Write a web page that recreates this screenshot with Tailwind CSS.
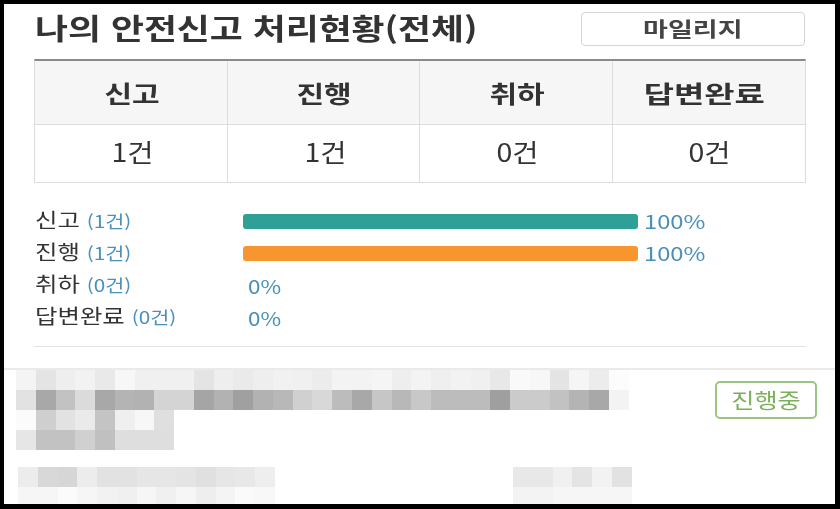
<!DOCTYPE html>
<html lang="ko">
<head>
    <meta charset="UTF-8">
    <title>안전신고 처리현황</title>
    <script src="https://cdn.jsdelivr.net/npm/@tailwindcss/browser@4"></script>
</head>
<body class="bg-black h-[509px] overflow-hidden font-['Noto_Sans_CJK_KR','Noto_Sans',sans-serif]">
    <div class="ml-[4px] mt-[4px] w-[831px] h-[500px] bg-white overflow-hidden absolute blur-[0.4px]">
        <div class="px-[30px]">
            <div class="flex justify-between items-start h-[55px]">
                <h2 class="ml-[1px] mt-[1px] text-[29px] leading-[44px] font-bold text-[#333] whitespace-nowrap origin-left scale-x-[1.235]">나의 안전신고 처리현황(전체)</h2>
                <button class="mt-[8px] w-[224px] h-[34px] border border-[#d5d5d5] rounded-[4px] text-[20px] leading-[30px] font-bold text-[#444]"><span class="inline-block scale-x-[1.35]">마일리지</span></button>
            </div>
            <div class="w-[772px] border-t-2 border-t-[#8a8a8a] border-x border-b border-x-[#ddd] border-b-[#ddd] grid grid-cols-4 text-center text-[#333]">
                <div class="h-[64px] bg-[#f6f6f6] border-b border-r border-[#ddd] flex items-center justify-center text-[24px] font-bold"><span class="translate-x-[1px] scale-x-[1.25]">신고</span></div>
                <div class="h-[64px] bg-[#f6f6f6] border-b border-r border-[#ddd] flex items-center justify-center text-[24px] font-bold"><span class="translate-x-[1px] scale-x-[1.25]">진행</span></div>
                <div class="h-[64px] bg-[#f6f6f6] border-b border-r border-[#ddd] flex items-center justify-center text-[24px] font-bold"><span class="translate-x-[1px] scale-x-[1.25]">취하</span></div>
                <div class="h-[64px] bg-[#f6f6f6] border-b border-[#ddd] flex items-center justify-center text-[24px] font-bold"><span class="-translate-x-[5px] scale-x-[1.37]">답변완료</span></div>
                <div class="h-[57px] pb-[3px] border-r border-[#ddd] flex items-center justify-center text-[25px]"><span class="translate-x-[2px] scale-x-[1.14]">1건</span></div>
                <div class="h-[57px] pb-[3px] border-r border-[#ddd] flex items-center justify-center text-[25px]"><span class="translate-x-[2px] scale-x-[1.14]">1건</span></div>
                <div class="h-[57px] pb-[3px] border-r border-[#ddd] flex items-center justify-center text-[25px]"><span class="translate-x-[2px] scale-x-[1.14]">0건</span></div>
                <div class="h-[57px] pb-[3px] flex items-center justify-center text-[25px]"><span class="translate-x-[1px] scale-x-[1.14]">0건</span></div>
            </div>
            <div class="mt-[22px] w-[772px] flex flex-col">
                <div class="h-[32px] flex items-center">
                    <div class="w-[209px] pb-[2px] pl-[1px] text-[20px] text-[#333] whitespace-nowrap"><span class="inline-block origin-left scale-x-[1.22]">신고 <span class="text-[17px] text-[#4a90bd]">(1건)</span></span></div>
                    <div class="w-[395px] h-[15px] rounded-[3px] bg-[#2fa096]"></div>
                    <div class="ml-[6px] pt-[1px] text-[19px] text-[#4a90bd] origin-left scale-x-[1.25]">100%</div>
                </div>
                <div class="h-[32px] flex items-center">
                    <div class="w-[209px] pb-[2px] pl-[1px] text-[20px] text-[#333] whitespace-nowrap"><span class="inline-block origin-left scale-x-[1.22]">진행 <span class="text-[17px] text-[#4a90bd]">(1건)</span></span></div>
                    <div class="w-[395px] h-[15px] rounded-[3px] bg-[#f7962f]"></div>
                    <div class="ml-[6px] pt-[1px] text-[19px] text-[#4a90bd] origin-left scale-x-[1.25]">100%</div>
                </div>
                <div class="h-[32px] flex items-center">
                    <div class="w-[214px] pb-[2px] pl-[1px] text-[20px] text-[#333] whitespace-nowrap"><span class="inline-block origin-left scale-x-[1.22]">취하 <span class="text-[17px] text-[#4a90bd]">(0건)</span></span></div>
                    <div class="pt-[2px] text-[19px] text-[#4a90bd] origin-left scale-x-[1.18]">0%</div>
                </div>
                <div class="h-[32px] flex items-center">
                    <div class="w-[214px] pb-[2px] pl-[1px] text-[20px] text-[#333] whitespace-nowrap"><span class="inline-block origin-left scale-x-[1.22]">답변완료 <span class="text-[17px] text-[#4a90bd]">(0건)</span></span></div>
                    <div class="pt-[2px] text-[19px] text-[#4a90bd] origin-left scale-x-[1.18]">0%</div>
                </div>
            </div>
            <div class="mt-[13px] w-[772px] border-t border-[#e4e4e4]"></div>
        </div>
        <div class="mt-[21px] border-t-2 border-[#eaeaea] pl-[12px] pt-0">
            <div class="flex items-start">
                <div class="flex flex-col w-[620px]">
                    <div class="flex h-[20px]">
                        <div class="w-[19.77px] bg-[#f4f4f4]"></div><div class="w-[19.77px] bg-[#e4e4e4]"></div><div class="w-[19.77px] bg-[#eeeeee]"></div><div class="w-[19.77px] bg-[#f2f2f2]"></div><div class="w-[19.77px] bg-[#e9e9e9]"></div><div class="w-[19.77px] bg-[#f7f7f7]"></div><div class="w-[19.77px] bg-[#f0f0f0]"></div><div class="w-[19.77px] bg-[#f0f0f0]"></div><div class="w-[19.77px] bg-[#f0f0f0]"></div><div class="w-[19.77px] bg-[#e4e4e4]"></div><div class="w-[19.77px] bg-[#eeeeee]"></div><div class="w-[19.77px] bg-[#eaeaea]"></div><div class="w-[19.77px] bg-[#eeeeee]"></div><div class="w-[19.77px] bg-[#f1f1f1]"></div><div class="w-[19.77px] bg-[#f0f0f0]"></div><div class="w-[19.77px] bg-[#ececec]"></div><div class="w-[19.77px] bg-[#f3f3f3]"></div><div class="w-[19.77px] bg-[#f3f3f3]"></div><div class="w-[19.77px] bg-[#f5f5f5]"></div><div class="w-[19.77px] bg-[#eeeeee]"></div><div class="w-[19.77px] bg-[#f3f3f3]"></div><div class="w-[19.77px] bg-[#efefef]"></div><div class="w-[19.77px] bg-[#f2f2f2]"></div><div class="w-[19.77px] bg-[#f0f0f0]"></div><div class="w-[19.77px] bg-[#e8e8e8]"></div><div class="w-[19.77px] bg-[#f9f9f9]"></div><div class="w-[19.77px] bg-[#f7f7f7]"></div><div class="w-[19.77px] bg-[#e4e4e4]"></div><div class="w-[19.77px] bg-[#f5f5f5]"></div><div class="w-[19.77px] bg-[#ececec]"></div><div class="w-[19.77px] bg-[#fcfcfc]"></div>
                    </div>
                    <div class="flex h-[20px]">
                        <div class="w-[19.77px] bg-[#e2e2e2]"></div><div class="w-[19.77px] bg-[#a8a8a8]"></div><div class="w-[19.77px] bg-[#c2c2c2]"></div><div class="w-[19.77px] bg-[#dbdbdb]"></div><div class="w-[19.77px] bg-[#a8a8a8]"></div><div class="w-[19.77px] bg-[#b4b4b4]"></div><div class="w-[19.77px] bg-[#b2b2b2]"></div><div class="w-[19.77px] bg-[#d4d4d4]"></div><div class="w-[19.77px] bg-[#d4d4d4]"></div><div class="w-[19.77px] bg-[#a5a5a5]"></div><div class="w-[19.77px] bg-[#b2b2b2]"></div><div class="w-[19.77px] bg-[#a0a0a0]"></div><div class="w-[19.77px] bg-[#b2b2b2]"></div><div class="w-[19.77px] bg-[#b8b8b8]"></div><div class="w-[19.77px] bg-[#d0d0d0]"></div><div class="w-[19.77px] bg-[#d8d8d8]"></div><div class="w-[19.77px] bg-[#bcbcbc]"></div><div class="w-[19.77px] bg-[#a8a8a8]"></div><div class="w-[19.77px] bg-[#c6c6c6]"></div><div class="w-[19.77px] bg-[#b8b8b8]"></div><div class="w-[19.77px] bg-[#c8c8c8]"></div><div class="w-[19.77px] bg-[#bcbcbc]"></div><div class="w-[19.77px] bg-[#bcbcbc]"></div><div class="w-[19.77px] bg-[#bcbcbc]"></div><div class="w-[19.77px] bg-[#9f9f9f]"></div><div class="w-[19.77px] bg-[#cbcbcb]"></div><div class="w-[19.77px] bg-[#cbcbcb]"></div><div class="w-[19.77px] bg-[#c2c2c2]"></div><div class="w-[19.77px] bg-[#b4b4b4]"></div><div class="w-[19.77px] bg-[#a8a8a8]"></div><div class="w-[19.77px] bg-[#f3f3f3]"></div>
                    </div>
                    <div class="flex h-[20px]">
                        <div class="w-[19.77px] bg-[#fbfbfb]"></div><div class="w-[19.77px] bg-[#cfcfcf]"></div><div class="w-[19.77px] bg-[#e2e2e2]"></div><div class="w-[19.77px] bg-[#eaeaea]"></div><div class="w-[19.77px] bg-[#c4c4c4]"></div><div class="w-[19.77px] bg-[#efefef]"></div><div class="w-[19.77px] bg-[#f7f7f7]"></div><div class="w-[19.77px] bg-[#dfdfdf]"></div>
                    </div>
                    <div class="flex h-[20px]">
                        <div class="w-[19.77px] bg-[#e6e6e6]"></div><div class="w-[19.77px] bg-[#c2c2c2]"></div><div class="w-[19.77px] bg-[#c2c2c2]"></div><div class="w-[19.77px] bg-[#d0d0d0]"></div><div class="w-[19.77px] bg-[#c0c0c0]"></div><div class="w-[19.77px] bg-[#dedede]"></div><div class="w-[19.77px] bg-[#dedede]"></div><div class="w-[19.77px] bg-[#dedede]"></div>
                    </div>
                </div>
                <div class="ml-[79px] mt-[11px] w-[102px] h-[38px] border-2 border-[#9cc583] rounded-[5px] flex items-center justify-center text-[21px] text-[#7bb05c] whitespace-nowrap"><span class="scale-x-[1.2]">진행중</span></div>
            </div>
            <div class="mt-[17px] pl-[2px] flex">
                <div class="flex flex-col w-[495px]">
                    <div class="flex h-[20px]">
                        <div class="w-[19.77px] bg-[#ececec]"></div><div class="w-[19.77px] bg-[#d8d8d8]"></div><div class="w-[19.77px] bg-[#d6d6d6]"></div><div class="w-[19.77px] bg-[#ececec]"></div><div class="w-[19.77px] bg-[#e2e2e2]"></div><div class="w-[19.77px] bg-[#e2e2e2]"></div><div class="w-[19.77px] bg-[#e6e6e6]"></div><div class="w-[19.77px] bg-[#e6e6e6]"></div><div class="w-[19.77px] bg-[#e4e4e4]"></div><div class="w-[19.77px] bg-[#e0e0e0]"></div><div class="w-[19.77px] bg-[#e6e6e6]"></div><div class="w-[19.77px] bg-[#e8e8e8]"></div><div class="w-[19.77px] bg-[#eeeeee]"></div>
                    </div>
                    <div class="flex h-[20px]">
                        <div class="w-[19.77px] bg-[#f6f6f6]"></div><div class="w-[19.77px] bg-[#f6f6f6]"></div><div class="w-[19.77px] bg-[#fbfbfb]"></div><div class="w-[19.77px] bg-[#f6f6f6]"></div><div class="w-[19.77px] bg-[#f2f2f2]"></div><div class="w-[19.77px] bg-[#f0f0f0]"></div><div class="w-[19.77px] bg-[#f6f6f6]"></div><div class="w-[19.77px] bg-[#f0f0f0]"></div><div class="w-[19.77px] bg-[#f6f6f6]"></div><div class="w-[19.77px] bg-[#eeeeee]"></div><div class="w-[19.77px] bg-[#f4f4f4]"></div><div class="w-[19.77px] bg-[#fafafa]"></div><div class="w-[19.77px] bg-[#f8f8f8]"></div>
                    </div>
                </div>
                <div class="flex flex-col">
                    <div class="flex h-[20px]">
                        <div class="w-[19.77px] bg-[#e8e8e8]"></div><div class="w-[19.77px] bg-[#e8e8e8]"></div><div class="w-[19.77px] bg-[#f0f0f0]"></div><div class="w-[19.77px] bg-[#e4e4e4]"></div><div class="w-[19.77px] bg-[#f2f2f2]"></div><div class="w-[19.77px] bg-[#e2e2e2]"></div>
                    </div>
                    <div class="flex h-[20px]">
                        <div class="w-[19.77px] bg-[#f3f3f3]"></div><div class="w-[19.77px] bg-[#f3f3f3]"></div><div class="w-[19.77px] bg-[#f6f6f6]"></div><div class="w-[19.77px] bg-[#f6f6f6]"></div><div class="w-[19.77px] bg-[#f6f6f6]"></div><div class="w-[19.77px] bg-[#f6f6f6]"></div>
                    </div>
                </div>
            </div>
        </div>
    </div>
</body>
</html>
